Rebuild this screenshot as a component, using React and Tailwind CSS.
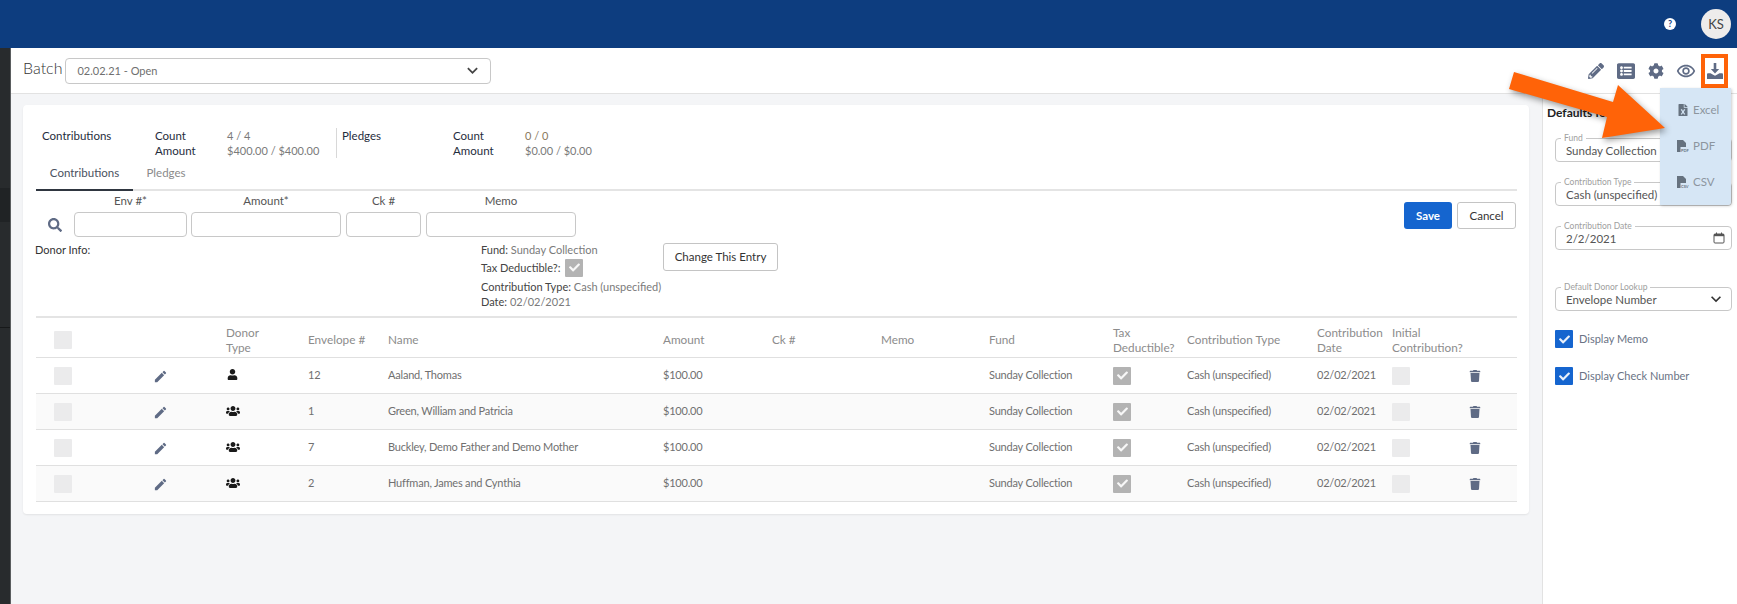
import React from "react";
import { FaPencilAlt, FaListAlt, FaCog, FaUser, FaUsers, FaFileExcel, FaSearch, FaCheck, FaTrash } from "react-icons/fa";
import { MdEdit, MdOutlineRemoveRedEye, MdKeyboardArrowDown } from "react-icons/md";

const cols = "grid grid-cols-[118px_72px_82px_80px_275px_109px_109px_108px_124px_74px_130px_75px_125px] items-center";

function Box() {
  return <div className="w-[18px] h-[18px] bg-[#ebebec] rounded-[1px]" />;
}
function Checked({ color = "bg-[#b3b3b3]" }) {
  return (
    <div className={`w-[18px] h-[18px] ${color} rounded-[1px] flex items-center justify-center`}>
      <FaCheck className="text-white/90 text-[11px]" />
    </div>
  );
}
function Row({ env, name, group, alt }) {
  return (
    <div className={`${cols} h-[36px] border-b border-[#e0e0e0] text-[11px] tracking-[-0.2px] text-[#707070] ${alt ? "bg-[#fafafa]" : "bg-white"}`}>
      <div className="pl-[18px]"><Box /></div>
      <div><MdEdit className="text-[#5f6b85] text-[15px] -ml-[1.5px] mt-[2px]" /></div>
      <div className="-mt-[1px]">{group ? <FaUsers className="text-[#1a1a1a] text-[14px]" /> : <FaUser className="text-[#1a1a1a] text-[11px] ml-[1px] -mt-[2px]" />}</div>
      <div>{env}</div>
      <div>{name}</div>
      <div>$100.00</div>
      <div />
      <div />
      <div>Sunday Collection</div>
      <div><Checked /></div>
      <div>Cash (unspecified)</div>
      <div>02/02/2021</div>
      <div className="flex justify-between pr-[36px]">
        <Box />
        <FaTrash className="text-[#5f6b85] text-[12px] mt-[3px]" />
      </div>
    </div>
  );
}
function Field({ label, value, right, cls }) {
  return (
    <div className={`relative w-[177px] h-[24px] border border-[#c8c8c8] rounded-[4px] flex items-center justify-between pl-[10px] pr-[6px] ${cls}`}>
      <span className="absolute -top-[6px] left-[5px] bg-white px-[3px] text-[8.5px] leading-[10px] text-[#a0a0a0]">{label}</span>
      <span className="text-[11.5px] text-[#555] pt-[1px]">{value}</span>
      {right}
    </div>
  );
}
function FileIcon({ tag }) {
  return (
    <svg width="14" height="12" viewBox="0 0 14 12" className="shrink-0">
      <path d="M0 0h6l3 3v9H0z" fill="#66727f" />
      <rect x="3.5" y="7" width="10.5" height="5" fill="#d6e6f5" />
      <text x="4" y="11.5" fontSize="4" fontWeight="700" fill="#66727f" fontFamily="Lato, sans-serif">{tag}</text>
    </svg>
  );
}

export default function App() {
  return (
    <div className="relative flex flex-col w-[1737px] h-[604px] overflow-hidden bg-[#f4f5f7] [font-family:Lato,sans-serif]">
      {/* top bar */}
      <div className="h-[48px] shrink-0 bg-[#0d3d7f] flex items-center justify-end pr-[6px]">
        <div className="w-[12px] h-[12px] mr-[25px] rounded-full bg-white text-[#0d3d7f] text-[9px] font-bold leading-[12px] text-center">?</div>
        <div className="w-[30px] h-[30px] rounded-full bg-[#eeeceb] text-[#444] text-[13px] leading-[30px] text-center">KS</div>
      </div>

      <div className="flex flex-1 min-h-0">
        {/* left strip */}
        <div className="relative w-[11px] shrink-0 bg-[#282b2d] border-r border-[#5a5d5f]">
          <div className="absolute top-[140px] left-0 w-full h-[34px] bg-[#202325]" />
          <div className="absolute top-[279px] left-0 w-full h-[1px] bg-[#17191a]" />
        </div>

        <div className="flex-1 flex flex-col min-w-0">
          {/* header */}
          <div className="h-[46px] shrink-0 bg-white border-b border-[#e2e2e2] flex items-center">
            <span className="ml-[12px] text-[16px] font-light text-[#333] leading-[20px] -mt-[5px]">Batch</span>
            <div className="ml-[3px] w-[426px] h-[26px] border border-[#c8c8c8] rounded-[4px] flex items-center justify-between pl-[11px] pr-[7px]">
              <span className="text-[11px] text-[#6f6f6f] pt-[2px]">02.02.21 - Open</span>
              <MdKeyboardArrowDown className="text-[#444] text-[21px]" />
            </div>
            <div className="ml-auto flex items-center mr-[9px] text-[#5f6b85]">
              <div className="w-[30px] flex justify-center"><FaPencilAlt className="text-[16px]" /></div>
              <div className="w-[30px] flex justify-center"><FaListAlt className="text-[18px]" /></div>
              <div className="w-[30px] flex justify-center"><FaCog className="text-[16px]" /></div>
              <div className="w-[30px] flex justify-center"><MdOutlineRemoveRedEye className="text-[20px]" /></div>
              <div className="w-[27px] h-[34px] border-[4px] border-[#ff6308] flex items-center justify-center mt-[1px]">
                <svg width="16" height="16" viewBox="0 0 16 16" fill="#5f6b85" className="shrink-0">
                  <path d="M6.7 0h2.6v6h2.9L8 10.4 3.8 6h2.9z" />
                  <path d="M0 11.5c0-.8.5-1.2 1.2-1.2h2.3L8 12.8l4.5-2.5h2.3c.7 0 1.2.4 1.2 1.2V16H0z" />
                </svg>
              </div>
            </div>
          </div>

          <div className="flex flex-1 min-h-0">
            {/* card area */}
            <div className="w-[1531px] shrink-0 pl-[12px] pt-[11px]">
              <div className="w-[1506px] h-[409px] bg-white rounded-[4px] shadow-[0_1px_2px_rgba(0,0,0,0.08)] relative pl-[13px]">
                {/* summary */}
                <div className="flex h-[30px] pt-[23px] box-content text-[11.5px] leading-[15px] text-[#1f2d3d]">
                  <div className="w-[119px] pl-[6px]">Contributions</div>
                  <div className="w-[72px]"><div>Count</div><div>Amount</div></div>
                  <div className="w-[109px] text-[#7a7a7a] text-[11px]"><div>4 / 4</div><div>$400.00 / $400.00</div></div>
                  <div className="w-[117px] border-l border-[#d8d8d8] pl-[5px]">Pledges</div>
                  <div className="w-[72px]"><div>Count</div><div>Amount</div></div>
                  <div className="text-[#8a7a60] text-[11px]"><div>0 / 0</div><div className="text-[#7a7a7a]">$0.00 / $0.00</div></div>
                </div>
                {/* tabs */}
                <div className="flex w-[1481px] h-[33px] border-b-2 border-[#e4e4e4] text-[11.5px]">
                  <div className="w-[97px] h-[33px] border-b-2 border-[#2f3640] text-center text-[#4a5160] pt-[6px]">Contributions</div>
                  <div className="w-[66px] text-center text-[#8a8a8a] pt-[6px]">Pledges</div>
                </div>
                {/* entry row */}
                <div className="relative h-[127px] w-[1481px] border-b-2 border-[#e4e4e4] text-[11.5px]">
                  <div className="flex pt-[2px] pl-[38px] text-[#555] leading-[15px]">
                    <div className="w-[113px] text-center">Env #*</div>
                    <div className="w-[150px] ml-[4px] text-center">Amount*</div>
                    <div className="w-[75px] ml-[5px] text-center">Ck #</div>
                    <div className="w-[150px] ml-[5px] text-center">Memo</div>
                  </div>
                  <div className="flex items-center mt-[4px] pl-[12px]">
                    <FaSearch className="text-[#5f6b85] text-[14px] mr-[12px]" />
                    <input className="w-[113px] h-[25px] border border-[#c8c8c8] rounded-[4px]" />
                    <input className="w-[150px] h-[25px] ml-[4px] border border-[#c8c8c8] rounded-[4px]" />
                    <input className="w-[75px] h-[25px] ml-[5px] border border-[#c8c8c8] rounded-[4px]" />
                    <input className="w-[150px] h-[25px] ml-[5px] border border-[#c8c8c8] rounded-[4px]" />
                  </div>
                  <div className="absolute -left-[1px] top-[51px] text-[#333] text-[11px] leading-[15px]">Donor Info:</div>
                  <div className="absolute left-[445px] top-[51px] text-[11px] leading-[15px] text-[#7a7a7a]">
                    <div><span className="text-[#444]">Fund:</span> Sunday Collection</div>
                    <div className="flex items-center h-[19px] mt-[1px] text-[#444]"><span className="mr-[5px]">Tax Deductible?:</span><Checked /></div>
                    <div className="mt-[2px]"><span className="text-[#444]">Contribution Type:</span> Cash (unspecified)</div>
                    <div><span className="text-[#444]">Date:</span> 02/02/2021</div>
                  </div>
                  <button className="absolute left-[627px] top-[52px] w-[115px] h-[28px] border border-[#c4c4c4] rounded-[3px] text-[#333]">Change This Entry</button>
                  <button className="absolute left-[1368px] top-[11px] w-[48px] h-[27px] bg-[#1565cf] rounded-[3px] text-white font-bold">Save</button>
                  <button className="absolute left-[1421px] top-[11px] w-[59px] h-[27px] border border-[#c4c4c4] rounded-[3px] text-[#333]">Cancel</button>
                </div>
                {/* table */}
                <div className="w-[1481px]">
                  <div className={`${cols} h-[40px] pt-[4px] border-b border-[#e0e0e0] text-[11.75px] leading-[15px] text-[#8c8c8c]`}>
                    <div className="pl-[18px]"><Box /></div>
                    <div />
                    <div>Donor<br />Type</div>
                    <div>Envelope #</div>
                    <div>Name</div>
                    <div>Amount</div>
                    <div>Ck #</div>
                    <div>Memo</div>
                    <div>Fund</div>
                    <div>Tax<br />Deductible?</div>
                    <div>Contribution Type</div>
                    <div>Contribution<br />Date</div>
                    <div>Initial<br />Contribution?</div>
                  </div>
                  <Row env="12" name="Aaland, Thomas" />
                  <Row env="1" name="Green, William and Patricia" group alt />
                  <Row env="7" name="Buckley, Demo Father and Demo Mother" group />
                  <Row env="2" name="Huffman, James and Cynthia" group alt />
                </div>
              </div>
            </div>

            {/* right panel */}
            <div className="flex-1 bg-white border-l border-[#e2e2e2] pl-[4px] pt-[11px]">
              <div className="text-[12px] font-bold text-[#222] leading-[15px] whitespace-nowrap">Defaults for</div>
              <div className="pl-[8px] pt-[18px]">
                <Field label="Fund" value="Sunday Collection" />
                <Field label="Contribution Type" value="Cash (unspecified)" cls="mt-[20px]" />
                <Field label="Contribution Date" value="2/2/2021" cls="mt-[20px]" right={
                  <svg width="12" height="12" viewBox="0 0 12 12" fill="none"><rect x="1" y="2" width="10" height="9" rx="1" stroke="#555" /><rect x="1" y="2" width="10" height="2.2" fill="#555" /><path d="M3.5 .5v2M8.5 .5v2" stroke="#555" /></svg>
                } />
                <Field label="Default Donor Lookup" value="Envelope Number" cls="mt-[37px]" right={<MdKeyboardArrowDown className="text-[#333] text-[20px] -mr-[1px]" />} />
                <div className="flex items-center mt-[19px] h-[18px] text-[11px] text-[#6a7385]">
                  <Checked color="bg-[#1565cf]" /><span className="ml-[6px]">Display Memo</span>
                </div>
                <div className="flex items-center mt-[19px] h-[18px] text-[11px] text-[#6a7385]">
                  <Checked color="bg-[#1565cf]" /><span className="ml-[6px]">Display Check Number</span>
                </div>
              </div>
            </div>
          </div>
        </div>
      </div>

      {/* dropdown */}
      <div className="absolute left-[1660px] top-[88px] w-[71px] h-[117px] bg-[#d6e6f5] rounded-br-[3px] shadow-[1px_1px_3px_rgba(0,0,0,0.2)] pl-[17px] pt-[14px] text-[11.5px] text-[#8c959e]">
        <div className="flex items-center gap-[4px] h-[16px]"><FaFileExcel className="text-[#66727f] text-[12px] shrink-0" />Excel</div>
        <div className="flex items-center gap-[2px] h-[16px] mt-[20px]"><FileIcon tag="PDF" />PDF</div>
        <div className="flex items-center gap-[2px] h-[16px] mt-[20px]"><FileIcon tag="CSV" />CSV</div>
      </div>

      {/* arrow */}
      <svg className="absolute left-[1500px] top-[65px] drop-shadow-[2px_3px_3px_rgba(0,0,0,0.4)]" width="175" height="85" viewBox="1500 65 175 85">
        <path d="M1514 72 L1613 102 L1618 85 L1665 128 L1602 138 L1607 117 L1509 89 Z" fill="#ff6308" />
      </svg>
    </div>
  );
}
